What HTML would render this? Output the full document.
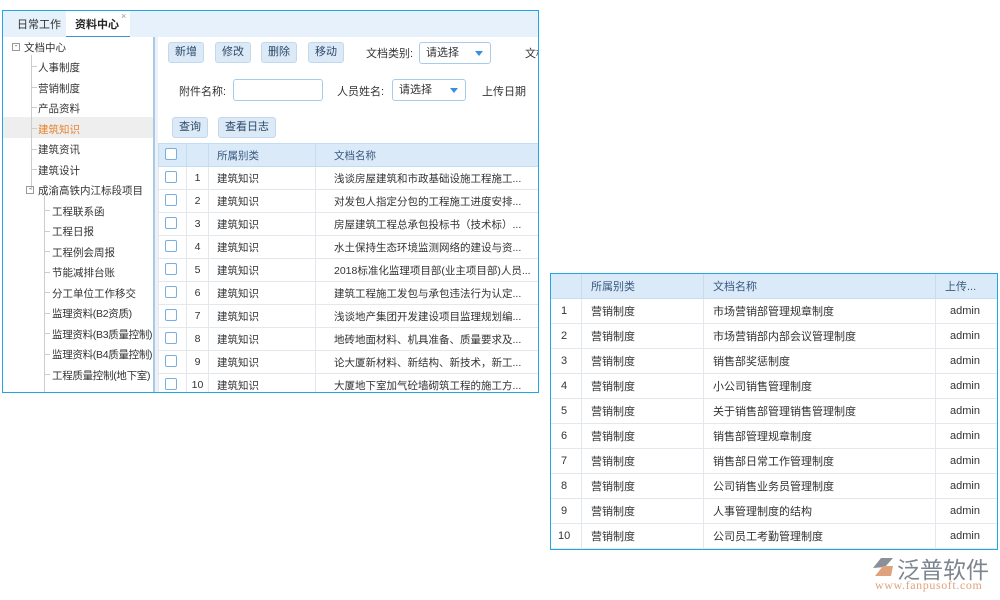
<!DOCTYPE html>
<html><head><meta charset="utf-8"><style>
*{margin:0;padding:0;box-sizing:border-box}
body{width:1000px;height:600px;background:#fff;position:relative;overflow:hidden;font-family:"Liberation Sans","Noto Sans CJK SC",sans-serif;font-size:11px;color:#333}
.a{position:absolute;white-space:nowrap}
#L{position:absolute;left:2px;top:10px;width:537px;height:383px;border:1.5px solid #1ea7e4;overflow:hidden;background:#fff}
#L .t{font-size:10.5px}
.btn{position:absolute;height:21px;line-height:19px;background:#dce9f6;border:1px solid #c3d8ee;border-radius:3px;text-align:center;color:#2c4a6a;font-size:11px}
.sel{position:absolute;height:22px;border:1px solid #a9cbea;border-radius:3px;background:#fff;padding-left:6px;line-height:20px}
.sel i{position:absolute;right:7px;top:8px;border-left:4px solid transparent;border-right:4px solid transparent;border-top:5px solid #3a8ee0}
.cb{position:absolute;width:12px;height:12px;border:1px solid #7aaee0;border-radius:2px;background:#fff}
table{border-collapse:collapse;position:absolute}
td{border:1px solid #e3e8ee;white-space:nowrap;overflow:hidden}
</style></head><body>
<div id="L">
 <div class="a" style="left:0;top:0;width:537px;height:26px;background:#e6f1fb"></div>
 <div class="a" style="left:14px;top:5px">日常工作</div>
 <div class="a" style="left:63px;top:0;width:64px;height:26px;background:#fff;border-bottom:1px solid #3c95d8"></div>
 <div class="a" style="left:72px;top:5px;font-weight:bold;color:#222">资料中心</div>
 <div class="a" style="left:118px;top:0;font-size:9px;color:#999">×</div>
 <div class="a" style="left:150px;top:26px;width:2px;height:360px;background:#a9c9e8"></div>
 <div class="a" style="left:152px;top:26px;width:3px;height:360px;background:#eef2f6"></div>
 <div class="a" style="left:0;top:106px;width:150px;height:21px;background:#eeeeee"></div>
 <div class="a" style="left:28px;top:44px;width:1px;height:135px;background:#ccc"></div>
 <div class="a" style="left:41px;top:185px;width:1px;height:200px;background:#ccc"></div>
 <div class="a" style="left:9px;top:32px;width:8px;height:8px;border:1px solid #999;font-size:7px;line-height:5px;text-align:center">-</div>
 <div class="a t" style="left:21px;top:29px">文档中心</div>
 <div class="a" style="left:28px;top:55px;width:6px;height:1px;background:#ccc"></div><div class="a t" style="left:35px;top:49px">人事制度</div>
 <div class="a" style="left:28px;top:76px;width:6px;height:1px;background:#ccc"></div><div class="a t" style="left:35px;top:70px">营销制度</div>
 <div class="a" style="left:28px;top:96px;width:6px;height:1px;background:#ccc"></div><div class="a t" style="left:35px;top:90px">产品资料</div>
 <div class="a" style="left:28px;top:117px;width:6px;height:1px;background:#ccc"></div><div class="a t" style="left:35px;top:111px;color:#e8832c">建筑知识</div>
 <div class="a" style="left:28px;top:138px;width:6px;height:1px;background:#ccc"></div><div class="a t" style="left:35px;top:131px">建筑资讯</div>
 <div class="a" style="left:28px;top:158px;width:6px;height:1px;background:#ccc"></div><div class="a t" style="left:35px;top:152px">建筑设计</div>
 <div class="a" style="left:23px;top:175px;width:8px;height:8px;border:1px solid #999;font-size:7px;line-height:5px;text-align:center">-</div>
 <div class="a t" style="left:35px;top:172px">成渝高铁内江标段项目</div>
 <div class="a" style="left:41px;top:199px;width:6px;height:1px;background:#ccc"></div><div class="a t" style="left:49px;top:193px">工程联系函</div>
 <div class="a" style="left:41px;top:220px;width:6px;height:1px;background:#ccc"></div><div class="a t" style="left:49px;top:213px">工程日报</div>
 <div class="a" style="left:41px;top:240px;width:6px;height:1px;background:#ccc"></div><div class="a t" style="left:49px;top:234px">工程例会周报</div>
 <div class="a" style="left:41px;top:261px;width:6px;height:1px;background:#ccc"></div><div class="a t" style="left:49px;top:254px">节能减排台账</div>
 <div class="a" style="left:41px;top:281px;width:6px;height:1px;background:#ccc"></div><div class="a t" style="left:49px;top:275px">分工单位工作移交</div>
 <div class="a" style="left:41px;top:302px;width:6px;height:1px;background:#ccc"></div><div class="a t" style="left:49px;top:295px;letter-spacing:-0.3px">监理资料(B2资质)</div>
 <div class="a" style="left:41px;top:322px;width:6px;height:1px;background:#ccc"></div><div class="a t" style="left:49px;top:316px;letter-spacing:-0.3px">监理资料(B3质量控制)</div>
 <div class="a" style="left:41px;top:343px;width:6px;height:1px;background:#ccc"></div><div class="a t" style="left:49px;top:336px;letter-spacing:-0.3px">监理资料(B4质量控制)</div>
 <div class="a" style="left:41px;top:363px;width:6px;height:1px;background:#ccc"></div><div class="a t" style="left:49px;top:357px;letter-spacing:-0.3px">工程质量控制(地下室)</div>
 <div class="btn" style="left:165px;top:31px;width:36px">新增</div>
 <div class="btn" style="left:212px;top:31px;width:36px">修改</div>
 <div class="btn" style="left:258px;top:31px;width:36px">删除</div>
 <div class="btn" style="left:305px;top:31px;width:36px">移动</div>
 <div class="a" style="left:363px;top:34px">文档类别:</div>
 <div class="sel" style="left:416px;top:31px;width:72px">请选择<i></i></div>
 <div class="a" style="left:522px;top:34px">文档</div>
 <div class="a" style="left:176px;top:72px">附件名称:</div>
 <div class="sel" style="left:230px;top:68px;width:90px"></div>
 <div class="a" style="left:334px;top:72px">人员姓名:</div>
 <div class="sel" style="left:389px;top:68px;width:74px">请选择<i></i></div>
 <div class="a" style="left:479px;top:72px">上传日期</div>
 <div class="btn" style="left:169px;top:106px;width:36px">查询</div>
 <div class="btn" style="left:215px;top:106px;width:58px">查看日志</div>
 <table style="left:155px;top:132px;width:384px;font-size:10.5px">
  <tr style="height:23px;background:#dbeaf8;color:#3a5a80"><td style="width:28px;border-color:#c6dcf0"></td><td style="width:22px;border-color:#c6dcf0"></td><td style="width:107px;padding-left:8px;border-color:#c6dcf0">所属别类</td><td style="padding-left:18px;border-color:#c6dcf0">文档名称</td></tr>
  <tr style="height:23px"><td></td><td style="text-align:center">1</td><td style="padding-left:8px">建筑知识</td><td style="padding-left:18px">浅谈房屋建筑和市政基础设施工程施工...</td></tr>
  <tr style="height:23px"><td></td><td style="text-align:center">2</td><td style="padding-left:8px">建筑知识</td><td style="padding-left:18px">对发包人指定分包的工程施工进度安排...</td></tr>
  <tr style="height:23px"><td></td><td style="text-align:center">3</td><td style="padding-left:8px">建筑知识</td><td style="padding-left:18px">房屋建筑工程总承包投标书（技术标）...</td></tr>
  <tr style="height:23px"><td></td><td style="text-align:center">4</td><td style="padding-left:8px">建筑知识</td><td style="padding-left:18px">水土保持生态环境监测网络的建设与资...</td></tr>
  <tr style="height:23px"><td></td><td style="text-align:center">5</td><td style="padding-left:8px">建筑知识</td><td style="padding-left:18px">2018标准化监理项目部(业主项目部)人员...</td></tr>
  <tr style="height:23px"><td></td><td style="text-align:center">6</td><td style="padding-left:8px">建筑知识</td><td style="padding-left:18px">建筑工程施工发包与承包违法行为认定...</td></tr>
  <tr style="height:23px"><td></td><td style="text-align:center">7</td><td style="padding-left:8px">建筑知识</td><td style="padding-left:18px">浅谈地产集团开发建设项目监理规划编...</td></tr>
  <tr style="height:23px"><td></td><td style="text-align:center">8</td><td style="padding-left:8px">建筑知识</td><td style="padding-left:18px">地砖地面材料、机具准备、质量要求及...</td></tr>
  <tr style="height:23px"><td></td><td style="text-align:center">9</td><td style="padding-left:8px">建筑知识</td><td style="padding-left:18px">论大厦新材料、新结构、新技术，新工...</td></tr>
  <tr style="height:23px"><td></td><td style="text-align:center">10</td><td style="padding-left:8px">建筑知识</td><td style="padding-left:18px">大厦地下室加气砼墙砌筑工程的施工方...</td></tr>
 </table>
 <div class="cb" style="left:162px;top:137px"></div>
 <div class="cb" style="left:162px;top:160px"></div><div class="cb" style="left:162px;top:183px"></div><div class="cb" style="left:162px;top:206px"></div><div class="cb" style="left:162px;top:229px"></div><div class="cb" style="left:162px;top:252px"></div><div class="cb" style="left:162px;top:275px"></div><div class="cb" style="left:162px;top:298px"></div><div class="cb" style="left:162px;top:321px"></div><div class="cb" style="left:162px;top:344px"></div><div class="cb" style="left:162px;top:367px"></div>
</div>
<div class="a" style="left:550px;top:273px;width:448px;height:277px;border:1.5px solid #1ea7e4;overflow:hidden">
 <table style="left:-1px;top:-1px;width:448px;font-size:11px">
  <tr style="height:25px;background:#dbeaf8;color:#3a5a80"><td style="width:31px;border-color:#c6dcf0"></td><td style="width:122px;padding-left:9px;border-color:#c6dcf0">所属别类</td><td style="width:232px;padding-left:9px;border-color:#c6dcf0">文档名称</td><td style="padding-left:9px;border-color:#c6dcf0">上传...</td></tr>
  <tr style="height:25px"><td style="padding-left:10px">1</td><td style="padding-left:9px">营销制度</td><td style="padding-left:9px">市场营销部管理规章制度</td><td style="padding-left:14px">admin</td></tr>
  <tr style="height:25px"><td style="padding-left:10px">2</td><td style="padding-left:9px">营销制度</td><td style="padding-left:9px">市场营销部内部会议管理制度</td><td style="padding-left:14px">admin</td></tr>
  <tr style="height:25px"><td style="padding-left:10px">3</td><td style="padding-left:9px">营销制度</td><td style="padding-left:9px">销售部奖惩制度</td><td style="padding-left:14px">admin</td></tr>
  <tr style="height:25px"><td style="padding-left:10px">4</td><td style="padding-left:9px">营销制度</td><td style="padding-left:9px">小公司销售管理制度</td><td style="padding-left:14px">admin</td></tr>
  <tr style="height:25px"><td style="padding-left:10px">5</td><td style="padding-left:9px">营销制度</td><td style="padding-left:9px">关于销售部管理销售管理制度</td><td style="padding-left:14px">admin</td></tr>
  <tr style="height:25px"><td style="padding-left:10px">6</td><td style="padding-left:9px">营销制度</td><td style="padding-left:9px">销售部管理规章制度</td><td style="padding-left:14px">admin</td></tr>
  <tr style="height:25px"><td style="padding-left:10px">7</td><td style="padding-left:9px">营销制度</td><td style="padding-left:9px">销售部日常工作管理制度</td><td style="padding-left:14px">admin</td></tr>
  <tr style="height:25px"><td style="padding-left:10px">8</td><td style="padding-left:9px">营销制度</td><td style="padding-left:9px">公司销售业务员管理制度</td><td style="padding-left:14px">admin</td></tr>
  <tr style="height:25px"><td style="padding-left:10px">9</td><td style="padding-left:9px">营销制度</td><td style="padding-left:9px">人事管理制度的结构</td><td style="padding-left:14px">admin</td></tr>
  <tr style="height:25px"><td style="padding-left:7px">10</td><td style="padding-left:9px">营销制度</td><td style="padding-left:9px">公司员工考勤管理制度</td><td style="padding-left:14px">admin</td></tr>
 </table>
</div>
<svg class="a" style="left:871px;top:556px" width="24" height="22" viewBox="0 0 24 22"><path d="M2 12 L10 2 L22 2 L14 11 Z" fill="#8a8f98"/><path d="M4 20 L12 10 L22 10 L20 20 Z" fill="#e0a27c"/></svg>
<div class="a" style="left:897px;top:551px;font-size:23px;color:#7d8590;letter-spacing:0px">泛普软件</div>
<div class="a" style="left:875px;top:578px;font-size:12px;color:#e0a27c;font-family:'Liberation Serif',serif;letter-spacing:0.6px">www.fanpusoft.com</div>
</body></html>
